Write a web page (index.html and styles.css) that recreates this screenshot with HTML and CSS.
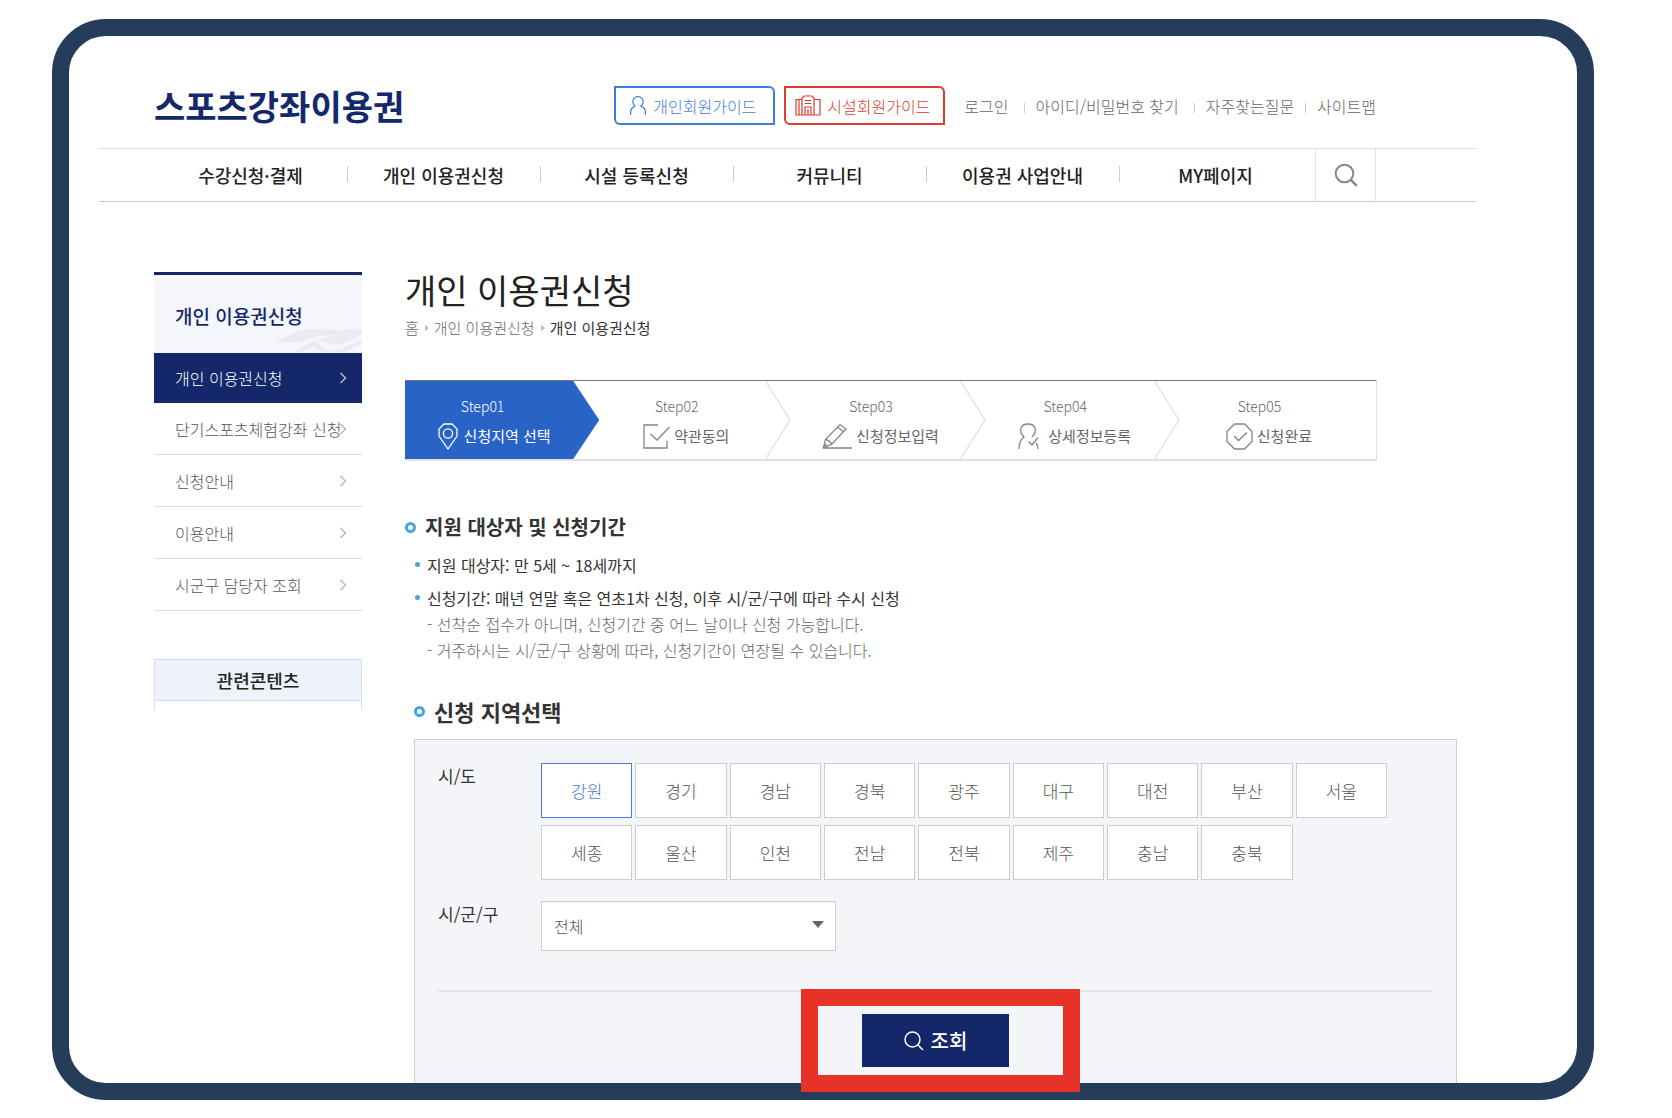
FILE: index.html
```html
<!DOCTYPE html>
<html lang="ko">
<head>
<meta charset="utf-8">
<meta name="viewport" content="width=device-width, initial-scale=1">
<title>개인 이용권신청 - 스포츠강좌이용권</title>
<link rel="stylesheet" href="styles.css">
</head>
<body>
<div class="frame">
  <header class="header">
    <a class="logo" href="#">스포츠강좌이용권</a>
    <div class="header-side">
      <a class="guide guide-personal" href="#">
        <svg width="18" height="20" viewBox="0 0 18 20" fill="none" stroke="currentColor" stroke-width="1.2"><path d="M6.2 10.1A5.2 5.2 0 1 1 11.8 10.1C14.6 11.2 16.4 13.200 16.400 16v3M6.200 10.100C3.400 11.200 1.600 13.200 1.600 16v3"/></svg>
        개인회원가이드
      </a>
      <a class="guide guide-facility" href="#">
        <svg width="26" height="21" viewBox="0 0 26 21" fill="none" stroke="currentColor" stroke-width="1.2"><path d="M7 20V3l2-2h8l2 2v17M7 4.500H1V20h24V4.500h-6M4 4.500V20M10 5.500h6M10 8.500h6M10 20v-8h6v8M13 14v6"/></svg>
        시설회원가이드
      </a>
      <ul class="util">
        <li><a href="#">로그인</a></li>
        <li><a href="#">아이디/비밀번호 찾기</a></li>
        <li><a href="#">자주찾는질문</a></li>
        <li><a href="#">사이트맵</a></li>
      </ul>
    </div>
  </header>

  <nav class="nav">
    <ul class="nav-list">
      <li><a href="#">수강신청·결제</a></li>
      <li><a href="#">개인 이용권신청</a></li>
      <li><a href="#">시설 등록신청</a></li>
      <li><a href="#">커뮤니티</a></li>
      <li><a href="#">이용권 사업안내</a></li>
      <li><a href="#">MY페이지</a></li>
    </ul>
    <button class="nav-search" type="button" aria-label="검색">
      <svg width="24" height="24" viewBox="0 0 24 24" fill="none" stroke="currentColor" stroke-width="2"><circle cx="10.500" cy="10.500" r="8.800"/><path d="M16.800 16.800l6 6" stroke-width="2.400"/></svg>
    </button>
  </nav>

  <div class="main">
    <aside class="side">
      <div class="side-head">
        <h2>개인 이용권신청</h2>
        <svg class="side-mark" width="88" height="26" viewBox="0 0 88 26" fill="#e9ebf0"><path d="M0 14C12 12 20 4 34 2c14-1 24 1 34 2-8 4-16 5-24 5-8 1-12 5-20 6-9 0-16 1-24-1z"/><path d="M20 25c8-5 13-8 21-12 3 4 9 9 17 12h-9c-4-1-7-4-9-6-4 3-9 6-20 6z"/><path d="M44 12c12-1 18-7 26-9 6-2 12-1 18-1v5c-8 2-12 8-20 10-8 1-16-1-24-5z"/><path d="M58 24c10 0 18-7 30-10v3c-7 2-11 6-18 8H60z"/></svg>
      </div>
      <ul class="side-list">
        <li><a class="is-active" href="#">개인 이용권신청<svg width="8" height="12" viewBox="0 0 8 12" fill="none" stroke="currentColor" stroke-width="1.500"><path d="M1.500 1l5 5-5 5"/></svg></a></li>
        <li><a href="#">단기스포츠체험강좌 신청<svg width="8" height="12" viewBox="0 0 8 12" fill="none" stroke="currentColor" stroke-width="1.500"><path d="M1.500 1l5 5-5 5"/></svg></a></li>
        <li><a href="#">신청안내<svg width="8" height="12" viewBox="0 0 8 12" fill="none" stroke="currentColor" stroke-width="1.500"><path d="M1.500 1l5 5-5 5"/></svg></a></li>
        <li><a href="#">이용안내<svg width="8" height="12" viewBox="0 0 8 12" fill="none" stroke="currentColor" stroke-width="1.500"><path d="M1.500 1l5 5-5 5"/></svg></a></li>
        <li><a href="#">시군구 담당자 조회<svg width="8" height="12" viewBox="0 0 8 12" fill="none" stroke="currentColor" stroke-width="1.500"><path d="M1.500 1l5 5-5 5"/></svg></a></li>
      </ul>
      <section class="related">
        <h2>관련콘텐츠</h2>
      </section>
    </aside>

    <main class="content">
      <h1>개인 이용권신청</h1>
      <ol class="crumbs">
        <li><a href="#">홈</a></li>
        <li><a href="#">개인 이용권신청</a></li>
        <li><a href="#" aria-current="page">개인 이용권신청</a></li>
      </ol>

      <ol class="steps">
        <li class="step is-current">
          <span class="step-no">Step01</span>
          <span class="step-name"><svg width="20" height="27" viewBox="0 0 20 27" fill="none" stroke="currentColor" stroke-width="1.300"><path d="M6 1h8l5 5v7l-9 13L1 13V6z"/><circle cx="10" cy="10.500" r="4.600"/></svg>신청지역 선택</span>
        </li>
        <li class="step">
          <span class="step-no">Step02</span>
          <span class="step-name"><svg width="27" height="25" viewBox="0 0 27 25" fill="none" stroke="currentColor" stroke-width="1.300"><path d="M15 1H1v23h23v-7M7.500 10l6.500 6L26.500 3"/></svg>약관동의</span>
          <svg class="step-edge" width="26" height="78" viewBox="0 0 26 78" fill="none" stroke="#e4e4e6" stroke-width="1.500"><path d="M.5 0l24.500 39L.5 78"/></svg>
        </li>
        <li class="step">
          <span class="step-no">Step03</span>
          <span class="step-name"><svg width="30" height="26" viewBox="0 0 30 26" fill="none" stroke="currentColor" stroke-width="1.300"><path d="M1 25h29M1.500 24.500l2-8L18 1.500l6 4.500L9.500 21.500zM3.500 16.500c3 .5 5 2 6 5M15.500 4l6 4.800M1.500 24.500l3.500-1-2.500-2.500z"/></svg>신청정보입력</span>
          <svg class="step-edge" width="26" height="78" viewBox="0 0 26 78" fill="none" stroke="#e4e4e6" stroke-width="1.500"><path d="M.5 0l24.500 39L.5 78"/></svg>
        </li>
        <li class="step">
          <span class="step-no">Step04</span>
          <span class="step-name step-name-wide"><svg width="22" height="27" viewBox="0 0 22 27" fill="none" stroke="currentColor" stroke-width="1.300"><path d="M1 26c0-6 1-9 5-12-3-3-4-6-3-9 1-2.500 3.500-4 7-4s6 1.500 7 4c1 3 0 6-3 9M10.500 18.500l3.500 3.500 6-7.500M18 20c1.500 1.500 2 3.500 2 6"/></svg>상세정보등록</span>
          <svg class="step-edge" width="26" height="78" viewBox="0 0 26 78" fill="none" stroke="#e4e4e6" stroke-width="1.500"><path d="M.5 0l24.500 39L.5 78"/></svg>
        </li>
        <li class="step">
          <span class="step-no">Step05</span>
          <span class="step-name"><svg width="27" height="27" viewBox="0 0 27 27" fill="none" stroke="currentColor" stroke-width="1.300"><path d="M8.500 1h10L26 8.500v10L18.500 26h-10L1 18.500v-10zM8 13l4.500 4.500 8.500-8"/></svg>신청완료</span>
        </li>
      </ol>

      <section class="period">
        <h2 class="section-title">지원 대상자 및 신청기간</h2>
        <ul class="notes">
          <li>지원 대상자: 만 5세 ~ 18세까지</li>
          <li>신청기간: 매년 연말 혹은 연초1차 신청, 이후 시/군/구에 따라 수시 신청
            <p>- 선착순 접수가 아니며, 신청기간 중 어느 날이나 신청 가능합니다.</p>
            <p>- 거주하시는 시/군/구 상황에 따라, 신청기간이 연장될 수 있습니다.</p>
          </li>
        </ul>
      </section>

      <section class="region">
        <h2 class="section-title section-title-large">신청 지역선택</h2>
        <form class="panel">
          <div class="field">
            <span class="field-label" id="sido-label">시/도</span>
            <div class="cities" role="group" aria-labelledby="sido-label">
              <button type="button" aria-pressed="true">강원</button>
              <button type="button">경기</button>
              <button type="button">경남</button>
              <button type="button">경북</button>
              <button type="button">광주</button>
              <button type="button">대구</button>
              <button type="button">대전</button>
              <button type="button">부산</button>
              <button type="button">서울</button>
              <button type="button">세종</button>
              <button type="button">울산</button>
              <button type="button">인천</button>
              <button type="button">전남</button>
              <button type="button">전북</button>
              <button type="button">제주</button>
              <button type="button">충남</button>
              <button type="button">충북</button>
            </div>
          </div>
          <div class="field">
            <label class="field-label" for="sigungu">시/군/구</label>
            <div class="select">
              <select id="sigungu"><option>전체</option></select>
              <svg width="12" height="7" viewBox="0 0 12 7" fill="#666"><path d="M0 0h12L6 7z"/></svg>
            </div>
          </div>
          <div class="actions">
            <div class="marked">
              <button class="submit" type="button">
                <svg width="20" height="20" viewBox="0 0 20 20" fill="none" stroke="currentColor" stroke-width="1.500"><circle cx="8.500" cy="8.500" r="7.500"/><path d="M14 14l5 5"/></svg>
                조회
              </button>
            </div>
          </div>
        </form>
      </section>
    </main>
  </div>
</div>
</body>
</html>
```
FILE: styles.css
```css
*, *::before, *::after { box-sizing: border-box; }

body {
  margin: 0;
  padding: 19px 78px 17px 52px;
  background: #fff;
  color: #222;
  font-family: "Noto Sans CJK KR", "Noto Sans", sans-serif;
  font-size: 16px;
  line-height: 26px;
}

h1, h2, p, ul, ol { margin: 0; padding: 0; }
ul, ol { list-style: none; }
a { color: inherit; text-decoration: none; }
button, select { font: inherit; color: inherit; cursor: pointer; }
svg { display: block; flex: none; }

.frame {
  border: 17px solid #253c5b;
  border-radius: 54px;
}

/* Header */
.header {
  display: flex;
  align-items: center;
  justify-content: space-between;
  min-height: 112px;
  padding: 27px 201px 0 85px;
}
.logo {
  color: #14296b;
  font-size: 34px;
  font-weight: 700;
  line-height: 40px;
  white-space: nowrap;
}
.header-side { display: flex; align-items: center; white-space: nowrap; }
.guide {
  display: flex;
  align-items: center;
  justify-content: center;
  gap: 6px;
  width: 161px;
  height: 39px;
  margin-right: 9px;
  padding-right: 4px;
  border: 2px solid;
  border-radius: 0 6px 0 6px;
  font-weight: 300;
}
.guide-personal { color: #3f7ddc; }
.guide-facility { color: #dc3b2e; margin-right: 19px; }
.util { display: flex; color: #666; font-weight: 300; }
.util li { display: flex; align-items: center; }
.util li + li::before {
  content: "";
  width: 1px;
  height: 10px;
  margin: 4px 11px 0 15px;
  background: #ccc;
}
.util li:last-child::before { margin-left: 11px; }

/* Main menu */
.nav {
  display: flex;
  margin: 0 101px 0 30px;
  padding: 0 100px 0 55px;
  border-top: 1px solid #ddd;
  border-bottom: 1px solid #ccc;
}
.nav-list { display: flex; flex: 1; margin-right: 3px; }
.nav-list li {
  position: relative;
  flex: 1;
  font-size: 18px;
  font-weight: 500;
  text-align: center;
}
.nav-list a { display: block; line-height: 52px; white-space: nowrap; }
.nav-list li + li::before {
  content: "";
  position: absolute;
  left: 0;
  top: 17px;
  width: 1px;
  height: 16px;
  background: #ccc;
}
.nav-search {
  display: flex;
  align-items: center;
  justify-content: center;
  width: 61px;
  padding: 0;
  border: solid #e3e3e3;
  border-width: 0 1px;
  background: none;
  color: #85868c;
}

/* Page body */
.main {
  display: flex;
  gap: 43px;
  padding: 70px 120px 0 85px;
}
.side { flex: none; width: 208px; }
.side-head {
  position: relative;
  padding: 28px 21px 24px;
  border-top: 3px solid #14276b;
  background: #f4f6fb;
}
.side-head h2 {
  color: #14276b;
  font-size: 19px;
  font-weight: 500;
  line-height: 26px;
}
.side-mark { position: absolute; right: 0; bottom: 0; }
.side-list a {
  display: flex;
  align-items: center;
  justify-content: space-between;
  height: 52px;
  padding: 0 15px 0 21px;
  border-bottom: 1px solid #ddd;
  color: #555;
  font-weight: 300;
  white-space: nowrap;
}
.side-list svg { margin-left: -8px; color: #bbb; }
.side-list .is-active {
  height: 50px;
  border: 0;
  background: #13276a;
  color: #fff;
}
.related {
  margin-top: 48px;
  padding-bottom: 9px;
  border: solid #d9dfea;
  border-width: 1px 1px 0;
}
.related h2 {
  border-bottom: 1px solid #d9dfea;
  background: #eef3fb;
  font-size: 18px;
  font-weight: 500;
  line-height: 40px;
  text-align: center;
}

.content { flex: 1; min-width: 0; }
h1 { font-size: 34px; font-weight: 400; line-height: 36px; }
.crumbs {
  display: flex;
  margin-top: 10px;
  color: #666;
  font-size: 15px;
  font-weight: 300;
  line-height: 20px;
}
.crumbs li { display: flex; align-items: center; }
.crumbs li + li::before {
  content: "";
  margin: 0 5px 0 6px;
  border: solid transparent;
  border-width: 3px 0 3px 4px;
  border-left-color: #bbb;
}
.crumbs [aria-current] { color: #333; font-weight: 400; }

/* Step bar */
.steps {
  display: flex;
  margin: 42px 80px 0 0;
  border: solid #e0e0e2;
  border-width: 1px 1px 2px 0;
  border-top-color: #74767d;
}
.step {
  position: relative;
  flex: 1;
  height: 78px;
  padding-top: 14px;
  color: #666;
  font-size: 15px;
  font-weight: 300;
  text-align: center;
}
.step-no { display: block; padding-right: 39px; font-size: 14px; line-height: 22px; }
.step-name {
  display: flex;
  align-items: center;
  justify-content: center;
  gap: 4px;
  height: 38px;
  padding-right: 20px;
  font-weight: 400;
  white-space: nowrap;
}
.step-name svg { opacity: .8; }
.step-name-wide { gap: 8px; }
.step-edge { position: absolute; top: 0; right: 2px; }
.is-current {
  background: #2963c6;
  color: #fff;
  clip-path: polygon(0 0, calc(100% - 26px) 0, 100% 50%, calc(100% - 26px) 100%, 0 100%);
}
.is-current .step-name { gap: 6px; padding-right: 16px; }
.is-current svg { opacity: 1; }

/* Sections */
.period { margin-top: 52px; }
.section-title {
  display: flex;
  align-items: center;
  gap: 9px;
  color: #333;
  font-size: 20px;
  font-weight: 700;
  line-height: 28px;
}
.section-title::before {
  content: "";
  width: 11px;
  height: 11px;
  border: 3px solid #48a4df;
  border-radius: 50%;
}
.section-title-large { font-size: 22px; }
.notes { margin-top: 11px; padding-left: 22px; }
.notes li { position: relative; color: #333; }
.notes li + li { margin-top: 7px; }
.notes li::before {
  content: "";
  position: absolute;
  left: -12px;
  top: 10px;
  width: 5px;
  height: 5px;
  border-radius: 50%;
  background: #48a4df;
}
.notes p { color: #666; font-weight: 300; }

/* Region form */
.region { margin: 34px 0 0 9px; }
.panel {
  margin-top: 14px;
  padding: 23px 23px 16px;
  border: solid #cfd0d4;
  border-width: 1px 1px 0;
  background: #f4f5f9;
}
.field { display: flex; }
.field + .field { margin-top: 21px; }
.field-label { flex: none; width: 103px; color: #333; font-size: 17px; }
.cities {
  display: grid;
  flex: 1;
  grid-template-columns: repeat(9, 1fr);
  gap: 7px 3px;
  margin-right: 46px;
}
.cities button {
  height: 55px;
  padding: 0;
  border: 1px solid #ccc;
  background: #fff;
  color: #555;
  font-size: 17px;
  font-weight: 300;
}
.cities [aria-pressed="true"] { border-color: #4a7be0; color: #3f7ddc; }
.select { position: relative; width: 295px; }
.select select {
  appearance: none;
  width: 100%;
  height: 50px;
  padding: 0 12px;
  border: 1px solid #ccc;
  border-radius: 0;
  background: #fff;
  color: #555;
  font-weight: 300;
}
.select svg { position: absolute; top: 20px; right: 12px; pointer-events: none; }
.actions {
  display: flex;
  justify-content: center;
  margin-top: 39px;
  padding-top: 22px;
  border-top: 2px solid #e6e7eb;
}
.marked { position: relative; }
.marked::after {
  content: "";
  position: absolute;
  inset: -25px -71px -25px -61px;
  border: 17px solid #e73227;
  pointer-events: none;
}
.submit {
  display: flex;
  align-items: center;
  justify-content: center;
  gap: 7px;
  width: 147px;
  height: 53px;
  padding: 0;
  border: 0;
  background: #13276a;
  color: #fff;
  font-size: 20px;
  font-weight: 500;
}
```
